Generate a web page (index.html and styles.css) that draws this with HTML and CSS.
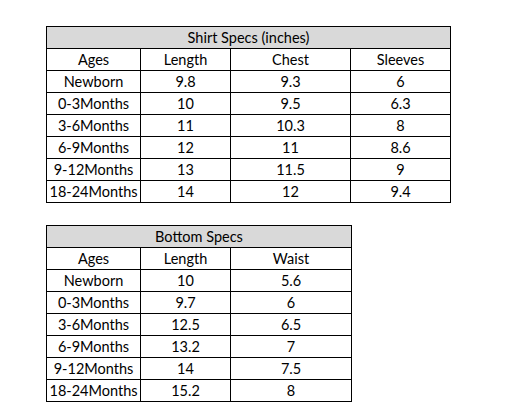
FILE: index.html
```html
<!DOCTYPE html>
<html>
<head>
<meta charset="utf-8">
<link rel="stylesheet" href="styles.css">
</head>
<body>
<div class="page">
  <table class="specs shirt">
    <colgroup><col class="c1"><col class="c2"><col class="c3"><col class="c4"></colgroup>
    <tr><th colspan="4">Shirt Specs (inches)</th></tr>
    <tr><td>Ages</td><td>Length</td><td>Chest</td><td>Sleeves</td></tr>
    <tr><td>Newborn</td><td>9.8</td><td>9.3</td><td>6</td></tr>
    <tr><td>0-3Months</td><td>10</td><td>9.5</td><td>6.3</td></tr>
    <tr><td>3-6Months</td><td>11</td><td>10.3</td><td>8</td></tr>
    <tr><td>6-9Months</td><td>12</td><td>11</td><td>8.6</td></tr>
    <tr><td>9-12Months</td><td>13</td><td>11.5</td><td>9</td></tr>
    <tr><td>18-24Months</td><td>14</td><td>12</td><td>9.4</td></tr>
  </table>
  <table class="specs bottom">
    <colgroup><col class="c1"><col class="c2"><col class="c3b"></colgroup>
    <tr><th colspan="3">Bottom Specs</th></tr>
    <tr><td>Ages</td><td>Length</td><td>Waist</td></tr>
    <tr><td>Newborn</td><td>10</td><td>5.6</td></tr>
    <tr><td>0-3Months</td><td>9.7</td><td>6</td></tr>
    <tr><td>3-6Months</td><td>12.5</td><td>6.5</td></tr>
    <tr><td>6-9Months</td><td>13.2</td><td>7</td></tr>
    <tr><td>9-12Months</td><td>14</td><td>7.5</td></tr>
    <tr><td>18-24Months</td><td>15.2</td><td>8</td></tr>
  </table>
</div>
</body>
</html>
```
FILE: styles.css
```css
html, body {
  margin: 0;
  padding: 0;
  background: #ffffff;
}
.page {
  padding: 26px 0 0 46px;
  display: flex;
  flex-direction: column;
  align-items: flex-start;
  gap: 22px;
}
.specs {
  border-collapse: collapse;
  table-layout: fixed;
  font-family: "Lato", "Open Sans", sans-serif;
  font-size: 14.5px;
  color: #000;
}
.shirt { width: 405px; }
.bottom { width: 306px; }
.c1 { width: 94px; }
.c2 { width: 90px; }
.c3 { width: 120px; }
.c4 { width: 100px; }
.c3b { width: 121px; }
.specs th, .specs td {
  border: 1px solid #000;
  height: 21px;
  padding: 0;
  text-align: center;
  vertical-align: middle;
  font-weight: normal;
  line-height: 21px;
  white-space: nowrap;
}
.specs th {
  background: #d9d9d9;
}
```
